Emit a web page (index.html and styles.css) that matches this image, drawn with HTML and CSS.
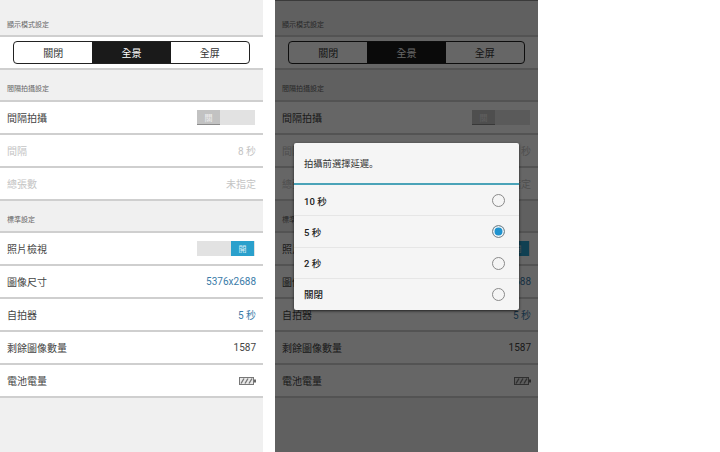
FILE: index.html
```html
<!DOCTYPE html>
<html lang="zh-Hant">
<head>
<meta charset="utf-8">
<title>設定</title>
<link rel="stylesheet" href="styles.css">
</head>
<body>
<div class="stage">
  <section class="phone">
    <div class="head head-first">顯示模式設定</div>
    <div class="seg-row">
      <div class="seg"><span class="seg-item">關閉</span><span class="seg-item seg-on">全景</span><span class="seg-item">全屏</span></div>
    </div>
    <div class="head">間隔拍攝設定</div>
    <div class="row"><span>間隔拍攝</span><span class="toggle"><span class="thumb thumb-off">關</span></span></div>
    <div class="row row-dim"><span>間隔</span><span>8 秒</span></div>
    <div class="row row-dim"><span>總張數</span><span>未指定</span></div>
    <div class="head">標準設定</div>
    <div class="row"><span>照片檢視</span><span class="toggle toggle-on"><span class="thumb thumb-on">開</span></span></div>
    <div class="row"><span>圖像尺寸</span><span class="link">5376x2688</span></div>
    <div class="row"><span>自拍器</span><span class="link">5 秒</span></div>
    <div class="row"><span>剩餘圖像數量</span><span>1587</span></div>
    <div class="row"><span>電池電量</span>
      <svg class="battery" width="17" height="8" viewBox="0 0 17 8"><rect x="0.5" y="0.5" width="14" height="7" fill="#e8e8e8" stroke="#777"/><path d="M2 6.5 5 1.5M6 6.5 9 1.5M10 6.5 13 1.5" stroke="#777" stroke-width="1.4" fill="none"/><rect x="15" y="2.5" width="2" height="3" fill="#666"/></svg>
    </div>
  </section>

  <section class="phone">
    <div class="head head-first">顯示模式設定</div>
    <div class="seg-row">
      <div class="seg"><span class="seg-item">關閉</span><span class="seg-item seg-on">全景</span><span class="seg-item">全屏</span></div>
    </div>
    <div class="head">間隔拍攝設定</div>
    <div class="row"><span>間隔拍攝</span><span class="toggle"><span class="thumb thumb-off">關</span></span></div>
    <div class="row row-dim"><span>間隔</span><span>8 秒</span></div>
    <div class="row row-dim"><span>總張數</span><span>未指定</span></div>
    <div class="head">標準設定</div>
    <div class="row"><span>照片檢視</span><span class="toggle toggle-on"><span class="thumb thumb-on">開</span></span></div>
    <div class="row"><span>圖像尺寸</span><span class="link">5376x2688</span></div>
    <div class="row"><span>自拍器</span><span class="link">5 秒</span></div>
    <div class="row"><span>剩餘圖像數量</span><span>1587</span></div>
    <div class="row"><span>電池電量</span>
      <svg class="battery" width="17" height="8" viewBox="0 0 17 8"><rect x="0.5" y="0.5" width="14" height="7" fill="#e8e8e8" stroke="#777"/><path d="M2 6.5 5 1.5M6 6.5 9 1.5M10 6.5 13 1.5" stroke="#777" stroke-width="1.4" fill="none"/><rect x="15" y="2.5" width="2" height="3" fill="#666"/></svg>
    </div>
    <div class="scrim">
      <div class="dialog">
        <div class="dialog-title" lang="zh-Hans">拍攝前選擇延遲。</div>
        <div class="option"><span>10 秒</span><span class="radio"></span></div>
        <div class="option"><span>5 秒</span><span class="radio radio-on"></span></div>
        <div class="option"><span>2 秒</span><span class="radio"></span></div>
        <div class="option"><span>關閉</span><span class="radio"></span></div>
      </div>
    </div>
  </section>
</div>
</body>
</html>
```
FILE: styles.css
```css
* { box-sizing: border-box; }
html, body { margin: 0; padding: 0; background: #fff; }
body {
  font-family: Roboto, "Noto Sans CJK TC", sans-serif;
  font-size: 10px;
  color: #444;
}
.stage { display: flex; gap: 12px; height: 452px; overflow: hidden; }
.phone {
  position: relative;
  width: 263px;
  height: 452px;
  background: #f0f0f0;
  overflow: hidden;
}
.head {
  height: 32px;
  padding: 0 7px 6px;
  display: flex;
  align-items: flex-end;
  font-size: 7px;
  line-height: 10px;
  color: #666;
  background: #f0f0f0;
  border-bottom: 2px solid #cfcfcf;
}
.head-first { height: 37px; padding-bottom: 5px; }
.seg-row {
  height: 33px;
  padding: 4px 13px 0;
  background: #fff;
  border-bottom: 2px solid #cfcfcf;
}
.seg {
  display: flex;
  height: 23px;
  border: 1.5px solid #222;
  border-radius: 4px;
  overflow: hidden;
  background: #fff;
}
.seg-item {
  flex: 1 1 0;
  display: flex;
  align-items: center;
  justify-content: center;
  color: #333;
}
.seg-on { background: #1a1a1a; color: #fff; }
.row {
  height: 33px;
  padding: 0 7px;
  display: flex;
  align-items: center;
  justify-content: space-between;
  background: #fff;
  border-bottom: 2px solid #cfcfcf;
}
.row-dim { color: #c4c4c4; }
.link { color: #3a7ba8; }
.toggle {
  display: flex;
  width: 58px;
  height: 15px;
  margin-right: 1px;
  background: #e2e2e2;
}
.toggle-on { justify-content: flex-end; padding: 0 1px 0 0; }
.thumb {
  width: 23px;
  display: flex;
  align-items: center;
  justify-content: center;
  font-size: 8px;
  color: #eee;
}
.thumb-off { background: #c2c2c2; border-bottom: 1px solid #8c8c8c; }
.thumb-on { background: #2aa0cc; color: #d8eef6; }
.battery { display: block; }
.scrim {
  position: absolute;
  inset: 0;
  background: rgba(0, 0, 0, 0.6);
  border-top: 1px solid #3a3a3a;
}
.dialog {
  position: absolute;
  left: 19px;
  top: 142px;
  width: 225px;
  height: 167px;
  background: #f5f5f5;
  border-radius: 2px;
  box-shadow: 0 1px 3px rgba(0, 0, 0, 0.7);
  color: #333;
  display: flex;
  flex-direction: column;
}
.dialog-title {
  height: 42px;
  padding: 0 10px;
  display: flex;
  align-items: center;
  font-family: Roboto, "Noto Sans CJK SC", sans-serif;
  font-size: 9.3px;
  border-bottom: 2px solid #4aa3b8;
}
.option {
  flex: 1 1 0;
  padding: 1px 14px 0 10px;
  display: flex;
  align-items: center;
  justify-content: space-between;
  font-size: 9.5px;
  font-weight: 500;
  color: #222;
  border-bottom: 1px solid #e6e6e6;
}
.option:last-child { border-bottom: 0; padding-bottom: 1px; }
.radio {
  width: 13px;
  height: 13px;
  border: 1px solid #8a8a8a;
  border-radius: 50%;
  background: #f5f5f5;
}
.radio-on {
  background: #1f93cf;
  box-shadow: inset 0 0 0 1.5px #f5f5f5;
}
```
